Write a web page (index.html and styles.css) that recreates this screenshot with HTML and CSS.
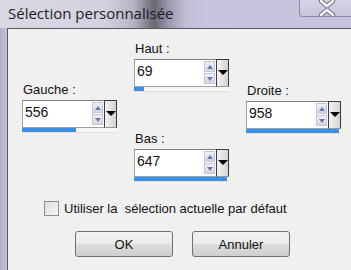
FILE: index.html
```html
<!DOCTYPE html>
<html lang="fr">
<head>
  <meta charset="UTF-8" />
  <title>Sélection personnalisée</title>
  <link rel="stylesheet" href="styles.css">
</head>
<body>
  <div class="titlebar">
    <span class="title">Sélection personnalisée</span>
    <div class="close">
      <svg width="22" height="16" viewBox="0 0 22 16">
        <path d="M5 1 L11 6 L17 1 M5 15 L11 10 L17 15" fill="none" stroke="#6e6c80" stroke-width="4.5" stroke-linecap="round"/>
        <path d="M5 1 L11 6 L17 1 M5 15 L11 10 L17 15" fill="none" stroke="#fff" stroke-width="2.5" stroke-linecap="round"/>
      </svg>
    </div>
  </div>

  <div class="frame">
    <div class="client">
      <div class="fields">
        <div class="col col-side">
          <div class="field">
            <label>Gauche :</label>
            <div class="spin">
              <div class="box"><span class="value">556</span><span class="arrows"><i class="up"></i><i class="down"></i></span></div>
              <div class="drop"></div>
            </div>
            <div class="bar"><div class="fill" style="width: 57%"></div></div>
          </div>
        </div>
        <div class="col col-mid">
          <div class="field">
            <label>Haut :</label>
            <div class="spin">
              <div class="box"><span class="value">69</span><span class="arrows"><i class="up"></i><i class="down"></i></span></div>
              <div class="drop"></div>
            </div>
            <div class="bar"><div class="fill" style="width: 10%"></div></div>
          </div>
          <div class="field">
            <label>Bas :</label>
            <div class="spin">
              <div class="box"><span class="value">647</span><span class="arrows"><i class="up"></i><i class="down"></i></span></div>
              <div class="drop"></div>
            </div>
            <div class="bar"><div class="fill" style="width: 98%"></div></div>
          </div>
        </div>
        <div class="col col-side col-right">
          <div class="field">
            <label>Droite :</label>
            <div class="spin">
              <div class="box"><span class="value">958</span><span class="arrows"><i class="up"></i><i class="down"></i></span></div>
              <div class="drop"></div>
            </div>
            <div class="bar"><div class="fill" style="width: 98%"></div></div>
          </div>
        </div>
      </div>

      <div class="check-row">
        <span class="checkbox"></span>
        <span>Utiliser la&nbsp; sélection actuelle par défaut</span>
      </div>

      <div class="buttons">
        <button>OK</button>
        <button>Annuler</button>
      </div>
    </div>
  </div>
</body>
</html>
```

FILE: styles.css
```css
body {
  margin: 0;
  width: 351px;
  height: 270px;
  overflow: hidden;
  font-family: 'Liberation Sans', Arial, sans-serif;
  background: #c6c2da;
}
.titlebar {
  height: 28px;
  display: flex;
  align-items: flex-start;
  justify-content: space-between;
  background: linear-gradient(90deg, #d9d8e2 0%, #d3d1df 30%, #b8b4c6 38%, #6a6772 44%, #9c98ae 48%, #c2bed8 53%, #c8c4dd 60%, #c6c2db 100%);
}
.title {
  font-family: 'Open Sans', 'Noto Sans', sans-serif;
  font-size: 15px;
  color: #1c1c24;
  padding: 2px 0 0 8px;
  line-height: 22px;
}
.close {
  width: 54px;
  height: 16px;
  margin-right: -4px;
  border: 1px solid #8d8ba2;
  border-top: none;
  border-radius: 0 0 0 4px;
  background: linear-gradient(#d6d3e6, #c9c5dd);
  display: flex;
  justify-content: center;
  align-items: center;
}
.frame {
  height: 242px;
  padding-left: 7px;
  background: linear-gradient(90deg, #b2aec6, #c4c0d8 6px);
}
.client {
  height: 241px;
  background: #f0f0f0;
  border-left: 1px solid #5a5868;
  border-top: 1px solid #5a5868;
  font-size: 13px;
  color: #111;
}
.fields {
  display: flex;
  gap: 17px;
  padding: 12px 0 0 14px;
}
.col {
  width: 95px;
  display: flex;
  flex-direction: column;
  gap: 39px;
}
.col-side {
  padding-top: 41px;
}
.col-right {
  padding-top: 42px;
}
.field label {
  display: block;
  height: 18px;
  line-height: 16px;
  padding-left: 1px;
}
.spin {
  display: flex;
  height: 28px;
}
.box {
  flex: 1;
  display: flex;
  justify-content: space-between;
  background: #fff;
  border: 1px solid #a0a0a0;
  border-top-color: #808080;
  border-right: none;
}
.value {
  font-size: 14px;
  padding: 3px 0 0 2px;
}
.arrows {
  width: 11px;
  display: flex;
  flex-direction: column;
  gap: 1px;
  padding: 1px 1px 2px 0;
}
.arrows i {
  flex: 1;
  display: flex;
  justify-content: center;
  align-items: center;
  background: linear-gradient(#eef0f7, #d3d7e6);
  border: 1px solid #c2c6d6;
}
.arrows .up::after {
  content: '';
  border-left: 3px solid transparent;
  border-right: 3px solid transparent;
  border-bottom: 4px solid #6c7aa8;
}
.arrows .down::after {
  content: '';
  border-left: 3px solid transparent;
  border-right: 3px solid transparent;
  border-top: 4px solid #6c7aa8;
}
.drop {
  width: 13px;
  display: flex;
  justify-content: center;
  padding-top: 10px;
  box-sizing: border-box;
  border: 1px solid #3c3c3c;
  border-bottom-color: #9a9a9a;
  background: linear-gradient(90deg, #f4f4f4, #d2d2d2);
}
.drop::after {
  content: '';
  height: 0;
  border-left: 5px solid transparent;
  border-right: 5px solid transparent;
  border-top: 5px solid #000;
}
.bar {
  height: 4px;
  background: #f6f6f6;
  border-bottom: 1px solid #e0e0e0;
}
.fill {
  height: 4px;
  background: #3b8fe4;
}
.check-row {
  display: flex;
  align-items: center;
  gap: 5px;
  margin: 19px 0 0 36px;
}
.checkbox {
  width: 13px;
  height: 13px;
  border: 1px solid #8e8f8f;
  background: linear-gradient(135deg, #dcdcdc, #f7f7f7);
}
.buttons {
  display: flex;
  gap: 19px;
  margin: 15px 0 0 67px;
}
button {
  width: 98px;
  height: 26px;
  font-family: 'Liberation Sans', Arial, sans-serif;
  font-size: 13px;
  color: #111;
  border: 1px solid #707070;
  border-radius: 3px;
  background: linear-gradient(#f2f2f2 0%, #ebebeb 50%, #dddddd 51%, #cfcfcf 100%);
}
```
